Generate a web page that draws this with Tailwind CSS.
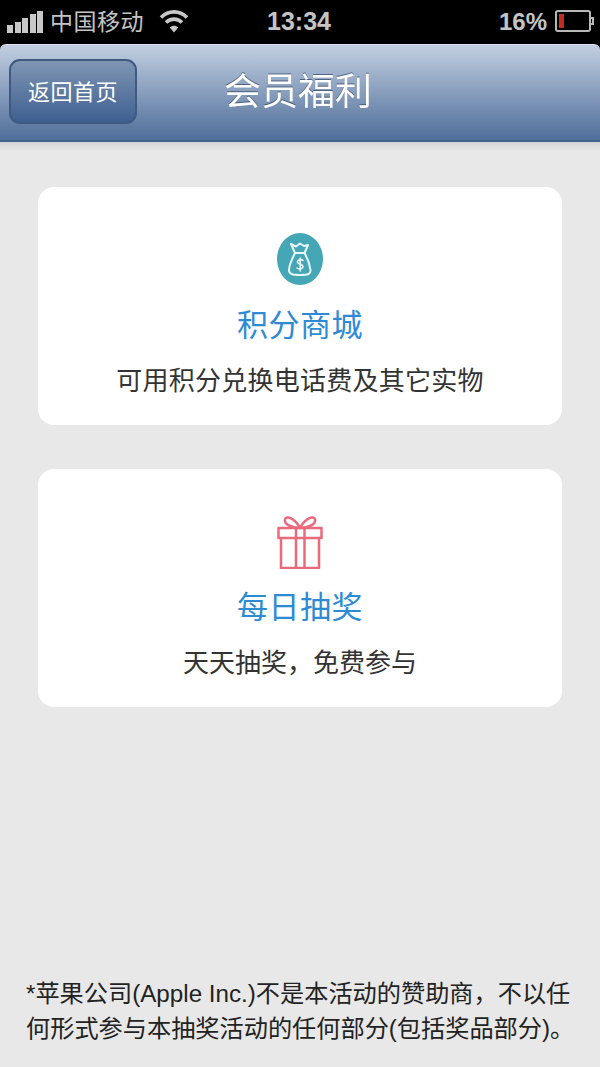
<!DOCTYPE html>
<html lang="zh">
<head>
<meta charset="UTF-8">
<title>会员福利</title>
<script src="https://cdn.jsdelivr.net/npm/@tailwindcss/browser@4"></script>
</head>
<body class="bg-black">
<div class="w-[600px] h-[1067px] flex flex-col overflow-hidden font-['Liberation_Sans','Noto_Sans_CJK_SC',sans-serif]">
  <!-- Status bar -->
  <div class="h-[44px] bg-black flex items-center text-[#c4c4c4] relative shrink-0">
    <div class="flex items-end gap-[1.500px] ml-[7px] mb-[1px]">
      <div class="w-[6px] h-[8px] bg-[#c8c8c8]"></div>
      <div class="w-[6px] h-[11px] bg-[#c8c8c8]"></div>
      <div class="w-[6px] h-[15px] bg-[#c8c8c8]"></div>
      <div class="w-[6px] h-[19px] bg-[#c8c8c8]"></div>
      <div class="w-[6px] h-[22px] bg-[#c8c8c8]"></div>
    </div>
    <span class="ml-[7px] text-[23px] leading-none tracking-[0.500px]">中国移动</span>
    <svg class="ml-[15px] mb-[3px]" width="30" height="26" viewBox="0 0 30 26" fill="none" stroke="#c8c8c8" stroke-width="3.6">
      <path d="M2 9.5C9.5 2 20.5 2 28 9.5"/>
      <path d="M7 14.500C11.500 10 18.500 10 23 14.500"/>
      <path d="M15 24.500L10.800 19.500C13 17.300 17 17.300 19.200 19.500Z" fill="#c8c8c8" stroke="none"/>
    </svg>
    <span class="absolute left-[267px] top-[5px] text-[25px] leading-[32px] font-bold">13:34</span>
    <span class="absolute left-[499px] top-[6px] text-[24px] leading-[32px] font-bold">16%</span>
    <div class="absolute left-[555px] top-[10px] w-[36px] h-[22px] border-[2px] border-[#b8b8b8] rounded-[3px] p-[2px]">
      <div class="w-[5px] h-full bg-[#c22a22]"></div>
    </div>
    <div class="absolute left-[591px] top-[17px] w-[3px] h-[8px] border-[2px] border-l-0 border-[#b8b8b8]"></div>
  </div>

  <!-- Nav bar -->
  <div class="h-[98px] shrink-0 rounded-t-[6px] bg-gradient-to-b from-[#c3cfe0] to-[#4f6e99] border-t-[1px] border-t-[#dde3ee] border-b-[2px] border-b-[#46628c] flex items-center relative">
    <div class="ml-[9px] mt-[-2px] w-[128px] h-[65px] rounded-[11px] border-[2px] border-[#3f5a82] bg-gradient-to-b from-[#7f95b3] to-[#3f6090] flex items-center justify-center text-white text-[22px] tracking-[0.500px] leading-none pt-[2px]">返回首页</div>
    <span class="absolute left-[224px] top-[23px] text-white text-[37px] leading-[50px] drop-shadow-[0_-1px_0_rgba(50,70,100,0.7)]">会员福利</span>
  </div>

  <!-- Content -->
  <div class="flex-1 flex flex-col px-[38px] pt-[45px] bg-gradient-to-b from-[#d5d5d5] from-0% to-[#e8e8e8] to-[1%]">
    <div class="h-[238px] rounded-[16px] bg-white flex flex-col items-center pt-[46px]">
      <svg width="46" height="52" viewBox="0 0 46 52" fill="none" stroke="#e8f6f8" stroke-width="2" stroke-linejoin="round" stroke-linecap="round">
        <ellipse cx="23" cy="26" rx="23" ry="26" fill="#45a6b6" stroke="none"/>
        <path d="M14 11L19 13.500L23 10.500L27 13L31 12L27.500 20H18Z"/>
        <path d="M18 20C15 26 12 33 12 37C12 41 15 42 23 42C31 42 34 41 33.500 37C33 33 31 26 27.500 20"/>
        <path d="M26 27.500C24.500 26 20.500 26.500 20.500 29C20.500 31.500 26 31 26 33.500C26 36 21.500 36.500 20 35M23.200 25V38" stroke-width="1.600"/>
      </svg>
      <div class="text-[#2e8bd3] text-[31px] leading-[44px] mt-[19px] tracking-[0.500px]">积分商城</div>
      <div class="text-[#333] text-[26px] leading-[36px] mt-[15px] tracking-[0.250px]">可用积分兑换电话费及其它实物</div>
    </div>

    <div class="h-[238px] rounded-[16px] bg-white flex flex-col items-center pt-[46px] mt-[44px]">
      <svg width="46" height="54" viewBox="0 0 46 54" fill="none" stroke="#ea6a7c" stroke-width="2.500" stroke-linejoin="round">
        <path d="M23 13C18 3 9 0 8 4.500C7 9 14 13 23 13C32 13 39 9 38 4.500C37 0 28 3 23 13Z"/>
        <path d="M1.500 13H44.500V23H1.500Z"/>
        <path d="M4 23V53H42V23"/>
        <path d="M19 13V53M27.500 13V53"/>
      </svg>
      <div class="text-[#2e8bd3] text-[31px] leading-[44px] mt-[17px] tracking-[0.500px]">每日抽奖</div>
      <div class="text-[#333] text-[26px] leading-[36px] mt-[15px]">天天抽奖，免费参与</div>
    </div>

    <div class="mt-auto mb-[21px] ml-[-12px] w-[555px] text-[#222] text-[24.200px] leading-[35px]">*苹果公司(Apple Inc.)不是本活动的赞助商，不以任何形式参与本抽奖活动的任何部分(包括奖品部分)。</div>
  </div>
</div>
</body>
</html>
